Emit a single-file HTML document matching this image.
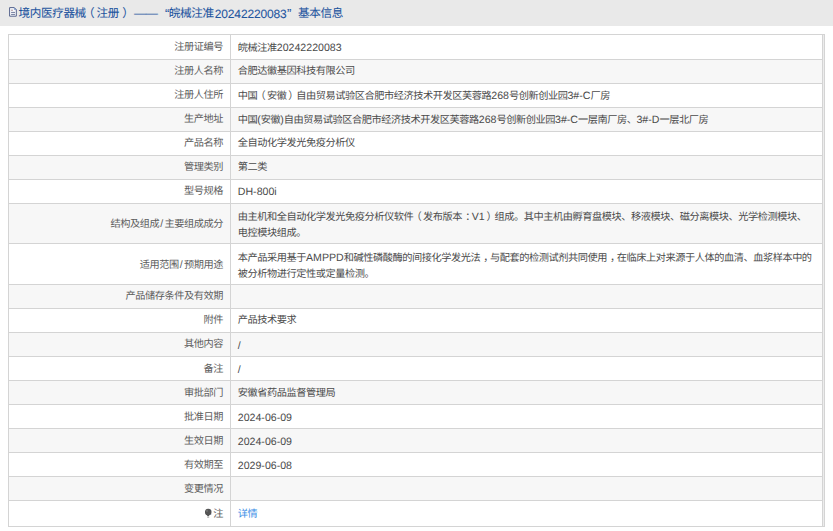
<!DOCTYPE html><html lang="zh-CN"><head><meta charset="utf-8"><style>
html,body{margin:0;padding:0;background:#fff;width:833px;height:531px;overflow:hidden}
body{text-rendering:geometricPrecision;text-spacing-trim:space-all;font-family:"Liberation Sans",sans-serif;position:relative;color:#333}
.hd{position:absolute;left:0;top:0;width:833px;height:26px;background:#e9e9e9}
.tt{position:absolute;top:5.8px;letter-spacing:-0.37px;-webkit-text-stroke:0.08px #1f559f;height:16px;line-height:16px;font-size:11.6px;color:#1f559f;white-space:nowrap}
.tt.l{font-size:12px;letter-spacing:-0.15px}
.tt.q{font-size:13px;letter-spacing:0}
.tt.d{transform:scaleX(1.05);transform-origin:0 0}
.ic{position:absolute;left:8px;top:6px;width:11px;height:12px}
.r{position:absolute;left:8px;width:814px}
.g{background:#f7f7f7}
.hl{position:absolute;left:8px;width:817px;height:1px;background:#d4d4d4}
.vl{position:absolute;top:34px;width:1px;height:493px;background:#d4d4d4}
.lb{position:absolute;right:610px;white-space:nowrap;font-size:10.2px;letter-spacing:-0.44px;color:#5c5c5c;text-align:right}
.vv{position:absolute;left:237.8px;white-space:nowrap;font-size:10.2px;letter-spacing:-0.44px;color:#4a4a4a}
.vv .l,.lb .l{font-size:10.6px;letter-spacing:0;position:relative;top:0.4px}
.lk{color:#3a8ee6}
.lb .l{margin:0 1.2px}
.po{position:relative;left:-1.8px}
.pc{position:relative;left:1.8px}
.pm{position:relative;left:3.2px}
.pk{position:relative;left:3px}
.pin{display:inline-block;width:8px;height:11px;vertical-align:-1px;margin-right:0px}
</style></head><body>
<div class="hd"></div>
<svg class="ic" viewBox="0 0 11 12"><path d="M1.6 1.6H6.3L8.3 3.6V10.2H1.6Z" fill="#fafbfd" stroke="#56638c" stroke-width="1"/><path d="M6.3 1.8V3.6H8.1Z" fill="#8fb3e6" stroke="#6c86b8" stroke-width="0.6"/><path d="M3.1 4.2H4.9" stroke="#9a7a80" stroke-width="0.9"/><path d="M3.1 6.4H7M3.1 8.4H7" stroke="#5f6b90" stroke-width="0.9"/></svg>
<div class="tt " style="left:18.5px">境内医疗器械</div>
<div class="tt " style="left:83.0px">（</div>
<div class="tt " style="left:96.5px">注册</div>
<div class="tt " style="left:122.2px">）</div>
<div class="tt d" style="left:133.5px">——</div>
<div class="tt q" style="left:165.0px">“</div>
<div class="tt " style="left:168.8px">皖械注准</div>
<div class="tt l" style="left:214.8px">20242220083</div>
<div class="tt q" style="left:287.0px">”</div>
<div class="tt " style="left:298.0px">基本信息</div>
<div class="r" style="top:35px;height:24px"></div>
<div class="r g" style="top:60px;height:23px"></div>
<div class="r" style="top:84px;height:23px"></div>
<div class="r g" style="top:108px;height:23px"></div>
<div class="r" style="top:132px;height:23px"></div>
<div class="r g" style="top:156px;height:23px"></div>
<div class="r" style="top:180px;height:23px"></div>
<div class="r g" style="top:204px;height:39px"></div>
<div class="r" style="top:244px;height:40px"></div>
<div class="r g" style="top:285px;height:23px"></div>
<div class="r" style="top:309px;height:23px"></div>
<div class="r g" style="top:333px;height:23px"></div>
<div class="r" style="top:357px;height:23px"></div>
<div class="r g" style="top:381px;height:23px"></div>
<div class="r" style="top:405px;height:23px"></div>
<div class="r g" style="top:429px;height:23px"></div>
<div class="r" style="top:453px;height:23px"></div>
<div class="r g" style="top:477px;height:23px"></div>
<div class="r" style="top:501px;height:25px"></div>
<div class="hl" style="top:34px;width:817px"></div>
<div class="hl" style="top:59px;width:815px"></div>
<div class="hl" style="top:83px;width:815px"></div>
<div class="hl" style="top:107px;width:815px"></div>
<div class="hl" style="top:131px;width:815px"></div>
<div class="hl" style="top:155px;width:815px"></div>
<div class="hl" style="top:179px;width:815px"></div>
<div class="hl" style="top:203px;width:815px"></div>
<div class="hl" style="top:243px;width:815px"></div>
<div class="hl" style="top:284px;width:815px"></div>
<div class="hl" style="top:308px;width:815px"></div>
<div class="hl" style="top:332px;width:815px"></div>
<div class="hl" style="top:356px;width:815px"></div>
<div class="hl" style="top:380px;width:815px"></div>
<div class="hl" style="top:404px;width:815px"></div>
<div class="hl" style="top:428px;width:815px"></div>
<div class="hl" style="top:452px;width:815px"></div>
<div class="hl" style="top:476px;width:815px"></div>
<div class="hl" style="top:500px;width:815px"></div>
<div class="hl" style="top:526px;width:817px"></div>
<div style="position:absolute;left:823px;top:35px;width:1px;height:491px;background:#ececec"></div>
<div class="vl" style="left:8px"></div>
<div class="vl" style="left:230px"></div>
<div class="vl" style="left:822px"></div>
<div class="vl" style="left:824px"></div>
<div class="lb" style="top:39.60px;line-height:16px">注册证编号</div>
<div class="vv" style="top:39.60px;line-height:16px">皖械注准<span class=l>20242220083</span></div>
<div class="lb" style="top:64.10px;line-height:16px">注册人名称</div>
<div class="vv" style="top:64.10px;line-height:16px">合肥达徽基因科技有限公司</div>
<div class="lb" style="top:88.10px;line-height:16px">注册人住所</div>
<div class="vv" style="top:88.10px;line-height:16px">中国<span class=po>（</span>安徽<span class=pc>）</span>自由贸易试验区合肥市经济技术开发区芙蓉路<span class=l>268</span>号创新创业园<span class=l>3#-C</span>厂房</div>
<div class="lb" style="top:112.10px;line-height:16px">生产地址</div>
<div class="vv" style="top:112.10px;line-height:16px">中国<span class=l>(</span>安徽<span class=l>)</span>自由贸易试验区合肥市经济技术开发区芙蓉路<span class=l>268</span>号创新创业园<span class=l>3#-C</span>一层南厂房、<span class=l>3#-D</span>一层北厂房</div>
<div class="lb" style="top:136.10px;line-height:16px">产品名称</div>
<div class="vv" style="top:136.10px;line-height:16px">全自动化学发光免疫分析仪</div>
<div class="lb" style="top:160.10px;line-height:16px">管理类别</div>
<div class="vv" style="top:160.10px;line-height:16px">第二类</div>
<div class="lb" style="top:184.10px;line-height:16px">型号规格</div>
<div class="vv" style="top:184.10px;line-height:16px"><span class=l>DH-800i</span></div>
<div class="lb" style="top:216.10px;line-height:16px">结构及组成<span class=l>/</span>主要组成成分</div>
<div class="vv" style="top:209.00px;line-height:16px">由主机和全自动化学发光免疫分析仪软件<span class=po>（</span>发布版本<span class=pm>：</span><span class=l>V1</span><span class=pc>）</span>组成。其中主机由孵育盘模块、移液模块、磁分离模块、光学检测模块、<br>电控模块组成。</div>
<div class="lb" style="top:256.60px;line-height:16px">适用范围<span class=l>/</span>预期用途</div>
<div class="vv" style="top:249.50px;line-height:16px">本产品采用基于<span class=l>AMPPD</span>和碱性磷酸酶的间接化学发光法<span class=pk>，</span>与配套的检测试剂共同使用<span class=pk>，</span>在临床上对来源于人体的血清、血浆样本中的<br>被分析物进行定性或定量检测。</div>
<div class="lb" style="top:289.35px;line-height:16px">产品储存条件及有效期</div>
<div class="vv" style="top:289.35px;line-height:16px"></div>
<div class="lb" style="top:313.35px;line-height:16px">附件</div>
<div class="vv" style="top:313.35px;line-height:16px">产品技术要求</div>
<div class="lb" style="top:337.35px;line-height:16px">其他内容</div>
<div class="vv" style="top:337.35px;line-height:16px"><span class=l>/</span></div>
<div class="lb" style="top:361.60px;line-height:16px">备注</div>
<div class="vv" style="top:361.60px;line-height:16px"><span class=l>/</span></div>
<div class="lb" style="top:385.60px;line-height:16px">审批部门</div>
<div class="vv" style="top:385.60px;line-height:16px">安徽省药品监督管理局</div>
<div class="lb" style="top:409.60px;line-height:16px">批准日期</div>
<div class="vv" style="top:409.60px;line-height:16px"><span class=l>2024-06-09</span></div>
<div class="lb" style="top:433.60px;line-height:16px">生效日期</div>
<div class="vv" style="top:433.60px;line-height:16px"><span class=l>2024-06-09</span></div>
<div class="lb" style="top:457.60px;line-height:16px">有效期至</div>
<div class="vv" style="top:457.60px;line-height:16px"><span class=l>2029-06-08</span></div>
<div class="lb" style="top:481.60px;line-height:16px">变更情况</div>
<div class="vv" style="top:481.60px;line-height:16px"></div>
<div class="lb" style="top:506.60px;line-height:16px"><svg class=pin viewBox='0 0 8 11'><circle cx='3.2' cy='5.1' r='3.3' fill='#555'/><path d='M3.6 2.2a3 3 0 0 1 2.6 2.6V6.6L5 8H6.2V4.8z' fill='#4a5a78' opacity='0.6'/><path d='M1.9 7.2H4.5L4 9.3H2.4Z' fill='#555'/><circle cx='2' cy='3.9' r='0.7' fill='#9a9a9a'/><rect x='2.2' y='9.8' width='2' height='0.8' fill='#9a9a9a'/></svg>注</div>
<div class="vv" style="top:506.60px;line-height:16px"><span class=lk>详情</span></div>
</body></html>
